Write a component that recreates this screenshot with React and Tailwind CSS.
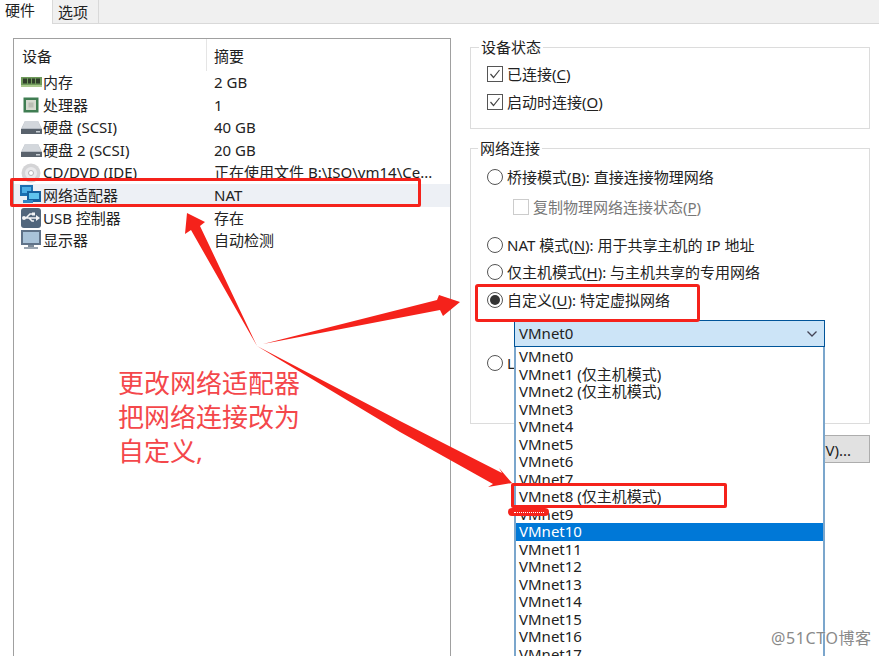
import React from "react";

const RamIcon = () => (
  <svg width="21" height="12" viewBox="0 0 21 12" className="shrink-0">
    <rect x="0" y="1" width="21" height="10" fill="#6f9a5a" />
    <rect x="2" y="2.5" width="4" height="5" fill="#2f3f2a" />
    <rect x="7" y="2.5" width="3" height="5" fill="#2f3f2a" />
    <rect x="11" y="2.5" width="3" height="5" fill="#2f3f2a" />
    <rect x="15" y="2.5" width="4" height="5" fill="#2f3f2a" />
    <rect x="0" y="9" width="21" height="2" fill="#a9c98c" />
  </svg>
);

const CpuIcon = () => (
  <svg width="16" height="16" viewBox="0 0 16 16" className="shrink-0">
    <rect x="0.5" y="0.5" width="15" height="15" fill="#3f7d52" />
    <rect x="3" y="3" width="10" height="10" fill="#d5d9cf" />
    <rect x="5.5" y="5.5" width="5" height="5" fill="#b9bdb4" />
  </svg>
);

const DiskIcon = () => (
  <svg width="21" height="15" viewBox="0 0 21 15" className="shrink-0">
    <path d="M4 1h13l4 8v5H0V9z" fill="#b4bac2" />
    <path d="M4 1h13l3 7H1z" fill="#d3d7dc" />
    <rect x="0" y="9" width="21" height="5" fill="#59626c" />
    <rect x="15" y="11" width="4" height="1.5" fill="#c8ced4" />
  </svg>
);

const CdIcon = () => (
  <svg width="20" height="20" viewBox="0 0 20 20" className="shrink-0">
    <circle cx="10" cy="10" r="9.5" fill="#d4d4d6" />
    <circle cx="10" cy="10" r="6" fill="#e9e9eb" />
    <circle cx="10" cy="10" r="2.5" fill="#ffffff" stroke="#b5b5b8" />
  </svg>
);

const NetIcon = () => (
  <svg width="22" height="20" viewBox="0 0 22 20" className="shrink-0">
    <rect x="0" y="0" width="13" height="11" fill="#1c6fb0" />
    <rect x="2" y="2" width="9" height="6" fill="#4fb0e6" />
    <rect x="7" y="6" width="14" height="11" fill="#14609e" />
    <rect x="9" y="8" width="10" height="6" fill="#5fc4ee" />
    <rect x="3" y="15" width="10" height="3" fill="#2f86c4" />
  </svg>
);

const UsbIcon = () => (
  <svg width="20" height="20" viewBox="0 0 20 20" className="shrink-0">
    <rect x="0" y="0" width="20" height="20" rx="3" fill="#51667c" />
    <path d="M2 10h14M5 10l4-4h3M8 10l3 3h2" fill="none" stroke="#f2f4f6" strokeWidth="1.6" />
    <path d="M15 7l4 3-4 3z" fill="#f2f4f6" />
    <rect x="11" y="4.5" width="3" height="3" fill="#f2f4f6" />
    <circle cx="3" cy="10" r="2" fill="#f2f4f6" />
  </svg>
);

const MonitorIcon = () => (
  <svg width="20" height="20" viewBox="0 0 20 20" className="shrink-0">
    <rect x="0" y="0" width="20" height="15" fill="#5f7288" />
    <rect x="2" y="2" width="16" height="11" fill="#a9c3d9" />
    <rect x="7" y="15" width="6" height="2" fill="#7c8a99" />
    <rect x="3" y="17" width="14" height="2" fill="#9aa5b1" />
  </svg>
);

const devices = [
  { icon: <RamIcon />, name: "内存", summary: "2 GB" },
  { icon: <CpuIcon />, name: "处理器", summary: "1" },
  { icon: <DiskIcon />, name: "硬盘 (SCSI)", summary: "40 GB" },
  { icon: <DiskIcon />, name: "硬盘 2 (SCSI)", summary: "20 GB" },
  { icon: <CdIcon />, name: "CD/DVD (IDE)", summary: "正在使用文件 B:\\ISO\\vm14\\Ce..." },
  { icon: <NetIcon />, name: "网络适配器", summary: "NAT", selected: true },
  { icon: <UsbIcon />, name: "USB 控制器", summary: "存在" },
  { icon: <MonitorIcon />, name: "显示器", summary: "自动检测" },
];

const vmnets = [
  "VMnet0",
  "VMnet1 (仅主机模式)",
  "VMnet2 (仅主机模式)",
  "VMnet3",
  "VMnet4",
  "VMnet5",
  "VMnet6",
  "VMnet7",
  "VMnet8 (仅主机模式)",
  "VMnet9",
  "VMnet10",
  "VMnet11",
  "VMnet12",
  "VMnet13",
  "VMnet14",
  "VMnet15",
  "VMnet16",
  "VMnet17",
];

const Check = () => (
  <span className="w-[16px] h-[16px] border border-[#555] flex items-center justify-center shrink-0">
    <svg width="12" height="12" viewBox="0 0 12 12">
      <path d="M1.5 6l3 3.5 6-7.5" fill="none" stroke="#444" strokeWidth="1.2" />
    </svg>
  </span>
);

const Radio = ({ on }) => (
  <span className="w-[16px] h-[16px] rounded-full border border-[#555] flex items-center justify-center shrink-0 bg-white">
    {on && <span className="w-[10px] h-[10px] rounded-full bg-[#333]" />}
  </span>
);

const Key = ({ children }) => <span className="underline underline-offset-2">{children}</span>;

const Annotations = () => (
  <svg width="879" height="656" className="absolute left-0 top-0 z-20 pointer-events-none">
    <polygon points="187,213 205,222 200,226 257,346 191,230 185,234" fill="#f5221b" />
    <polygon points="263,344 437,300 439,295 460,302 443,316 440,310" fill="#f5221b" />
    <polygon points="257,346 400,421 502,473 499,468 512,483 488,487 493,484 400,432" fill="#f5221b" />
  </svg>
);

export default function App() {
  return (
    <div className="relative w-[879px] h-[656px] overflow-hidden bg-white text-[15px] text-[#222] font-['Noto_Sans','Noto_Sans_CJK_SC',sans-serif]">
      {/* tab strip */}
      <div className="flex h-[24px] bg-[#f0f0f0] border-b border-[#d9d9d9]">
        <div className="w-[52px] h-[24px] bg-white pl-[5px] leading-[20px]">硬件</div>
        <div className="w-[47px] h-[23px] border-x border-[#d9d9d9] pl-[5px] leading-[24px]">选项</div>
      </div>

      <div className="flex pl-[13px] pt-[14px]">
        {/* device list */}
        <div className="w-[438px] h-[640px] border border-[#a0a0a0] shrink-0">
          <div className="flex h-[32px] leading-[34px]">
            <div className="w-[193px] pl-[8px] border-r border-[#e5e5e5]">设备</div>
            <div className="pl-[7px]">摘要</div>
          </div>
          {devices.map((d) => (
            <div
              key={d.summary}
              className={`flex items-center h-[22.6px] ${d.selected ? "bg-[#edf0f5]" : ""}`}
            >
              <div className="w-[194px] pl-[6px] flex items-center whitespace-nowrap">
                <span className="w-[22px] flex justify-center shrink-0">{d.icon}</span>
                <span className="ml-[1px]">{d.name}</span>
              </div>
              <div className="pl-[6px] whitespace-nowrap">{d.summary}</div>
            </div>
          ))}
        </div>

        {/* settings */}
        <div className="ml-[19px] w-[400px] flex flex-col">
          <div className="relative h-[82px] mt-[9px] border border-[#dcdcdc] pl-[16px] pt-[15px]">
            <div className="absolute -top-[12px] left-[8px] px-[2px] bg-white leading-[22px]">设备状态</div>
            <div className="flex items-center gap-[4px] h-[22px] leading-[22px]">
              <Check />
              <span>已连接(<Key>C</Key>)</span>
            </div>
            <div className="flex items-center gap-[4px] h-[22px] mt-[6px] leading-[22px]">
              <Check />
              <span>启动时连接(<Key>O</Key>)</span>
            </div>
          </div>

          <div className="relative h-[276px] mt-[19px] border border-[#dcdcdc] pl-[16px]">
            <div className="absolute -top-[12px] left-[7px] px-[2px] bg-white leading-[22px]">网络连接</div>
            <div className="flex items-center gap-[4px] h-[22px] mt-[17px]">
              <Radio />
              <span>桥接模式(<Key>B</Key>): 直接连接物理网络</span>
            </div>
            <div className="flex items-center gap-[4px] h-[22px] mt-[8px] ml-[26px] text-[#777]">
              <span className="w-[16px] h-[16px] border border-[#ccc] shrink-0" />
              <span>复制物理网络连接状态(<Key>P</Key>)</span>
            </div>
            <div className="flex items-center gap-[4px] h-[22px] mt-[16px]">
              <Radio />
              <span>NAT 模式(<Key>N</Key>): 用于共享主机的 IP 地址</span>
            </div>
            <div className="flex items-center gap-[4px] h-[22px] mt-[5px]">
              <Radio />
              <span>仅主机模式(<Key>H</Key>): 与主机共享的专用网络</span>
            </div>
            <div className="flex items-center gap-[4px] h-[22px] mt-[6px]">
              <Radio on />
              <span>自定义(<Key>U</Key>): 特定虚拟网络</span>
            </div>

            {/* combo with its open list */}
            <div className="relative z-10 ml-[27px] w-[311px] h-[27px] mt-[9px] bg-[#cce4f7] border border-[#005499] flex items-center justify-between pl-[4px] pr-[6px]">
              <span>VMnet0</span>
              <svg width="12" height="8" viewBox="0 0 12 8">
                <path d="M1.5 1.5L6 6l4.5-4.5" fill="none" stroke="#445" strokeWidth="1.3" />
              </svg>
              <div className="absolute left-[-1px] top-[26px] w-[311px] pt-[1px] bg-white border-2 border-t-0 border-[#7ba6cc]">
                {vmnets.map((v) => (
                  <div
                    key={v}
                    className={`h-[17.5px] leading-[17.5px] pl-[3px] ${v === "VMnet10" ? "bg-[#0078d7] text-white" : ""}`}
                  >
                    {v}
                  </div>
                ))}
              </div>
            </div>

            <div className="flex items-center gap-[4px] h-[22px] mt-[5px]">
              <Radio />
              <span>LAN 区段(<Key>L</Key>):</span>
            </div>
          </div>

          <div className="self-end mt-[11px] w-[120px] h-[28px] bg-[#e1e1e1] border border-[#adadad] text-right pr-[18px] leading-[28px]">
            高级(V)...
          </div>
        </div>
      </div>

      {/* red marks drawn on top of the screenshot */}
      <div className="absolute z-20 left-[10px] top-[178px] w-[411px] h-[29px] border-[3px] border-[#f5221b] rounded-[2px]" />
      <div className="absolute z-20 left-[475px] top-[284px] w-[225px] h-[38px] border-[3px] border-[#f5221b] rounded-[3px]" />
      <div className="absolute z-20 left-[511px] top-[483px] w-[216px] h-[25px] border-[3px] border-[#f5221b] rounded-[2px]" />
      <div className="absolute z-20 left-[508px] top-[508px] w-[41px] h-[8px] bg-[#f5221b] rounded-full flex items-center justify-center">
        <span className="w-[30px] border-t border-dotted border-white" />
      </div>
      <Annotations />

      <div className="absolute z-20 left-[118px] top-[366px] text-[26px] leading-[34px] text-[#f4474b]">
        <div>更改网络适配器</div>
        <div>把网络连接改为</div>
        <div>自定义,</div>
      </div>

      <div className="absolute z-20 left-[771px] top-[628px] text-[16px] leading-[20px] tracking-[0.6px] text-[#8a8a8a] [text-shadow:0_0_2px_#fff]">@51CTO博客</div>
    </div>
  );
}
